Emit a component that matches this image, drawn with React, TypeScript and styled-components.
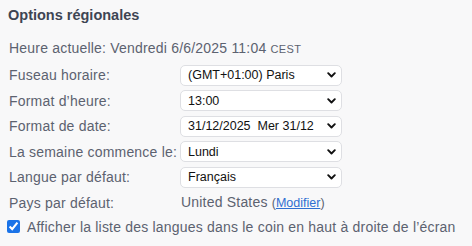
import styled, { createGlobalStyle } from 'styled-components'

const GlobalStyle = createGlobalStyle`
  html, body {
    margin: 0;
    padding: 0;
    background: #f8f8f9;
  }
  body {
    font-family: "Liberation Sans", Arial, sans-serif;
  }
`

const Panel = styled.div`
  padding: 5px 0 0 9px;
  width: 472px;
  box-sizing: border-box;
  color: #5c6270;
  letter-spacing: 0.2px;
`

const Title = styled.h2`
  margin: 0 0 13px -1px;
  font-size: 14.5px;
  line-height: 20px;
  font-weight: 700;
  letter-spacing: 0;
  color: #3e4553;
`

const Now = styled.div`
  font-size: 14px;
  line-height: 20px;
  margin-bottom: 5px;
`

const Zone = styled.span`
  font-size: 11px;
  letter-spacing: 0.4px;
`

const Form = styled.div`
  display: grid;
  grid-template-columns: 171px 162px;
  grid-auto-rows: 22px;
  row-gap: 3.6px;
  align-items: center;
`

const Label = styled.label`
  font-size: 14px;
  line-height: 20px;
  white-space: nowrap;
`

const SelectWrap = styled.div`
  position: relative;
  height: 21px;
`

const Select = styled.select`
  appearance: none;
  -webkit-appearance: none;
  width: 100%;
  height: 100%;
  margin: 0;
  padding: 0 18px 0 7px;
  border: 1px solid #dedfe3;
  border-radius: 5px;
  background: #ffffff;
  color: #111111;
  font-family: "Liberation Sans", Arial, sans-serif;
  font-size: 12.5px;
  letter-spacing: 0;
  outline: none;
`

const Chevron = styled.svg`
  position: absolute;
  right: 6px;
  top: 50%;
  width: 9px;
  height: 6px;
  margin-top: -3px;
  pointer-events: none;
`

const Country = styled.div`
  font-size: 14px;
  line-height: 20px;
  padding-left: 1px;
  white-space: nowrap;
`

const Paren = styled.span`
  font-size: 12.5px;
  letter-spacing: 0;
  color: #5c6270;
`

const Link = styled.a`
  color: #2f6fd1;
  text-decoration: underline;
  cursor: pointer;
`

const CheckRow = styled.label`
  display: flex;
  align-items: center;
  gap: 7px;
  margin: 3px 0 0 -2px;
  font-size: 14px;
  line-height: 20px;
  white-space: nowrap;
`

const Check = styled.input`
  width: 13px;
  height: 13px;
  margin: 0;
  accent-color: #1a73e8;
`

interface DropdownProps {
  value: string
}

function Dropdown({ value }: DropdownProps) {
  return (
    <SelectWrap>
      <Select defaultValue={value}>
        <option value={value}>{value}</option>
      </Select>
      <Chevron viewBox="0 0 9 6" fill="none" stroke="#111" strokeWidth={1.9} strokeLinecap="round" strokeLinejoin="round">
        <path d="M1.2 1.2 4.5 4.5l3.3-3.3" />
      </Chevron>
    </SelectWrap>
  )
}

export default function App() {
  return (
    <>
      <GlobalStyle />
      <Panel>
        <Title>Options régionales</Title>
        <Now>
          Heure actuelle: Vendredi 6/6/2025 11:04 <Zone>CEST</Zone>
        </Now>
        <Form>
          <Label>Fuseau horaire:</Label>
          <Dropdown value="(GMT+01:00) Paris" />
          <Label>Format d’heure:</Label>
          <Dropdown value="13:00" />
          <Label>Format de date:</Label>
          <Dropdown value={'31/12/2025\u00a0\u00a0Mer 31/12'} />
          <Label>La semaine commence le:</Label>
          <Dropdown value="Lundi" />
          <Label>Langue par défaut:</Label>
          <Dropdown value="Français" />
          <Label>Pays par défaut:</Label>
          <Country>
            United States <Paren>(<Link>Modifier</Link>)</Paren>
          </Country>
        </Form>
        <CheckRow>
          <Check type="checkbox" defaultChecked />
          Afficher la liste des langues dans le coin en haut à droite de l’écran
        </CheckRow>
      </Panel>
    </>
  )
}
